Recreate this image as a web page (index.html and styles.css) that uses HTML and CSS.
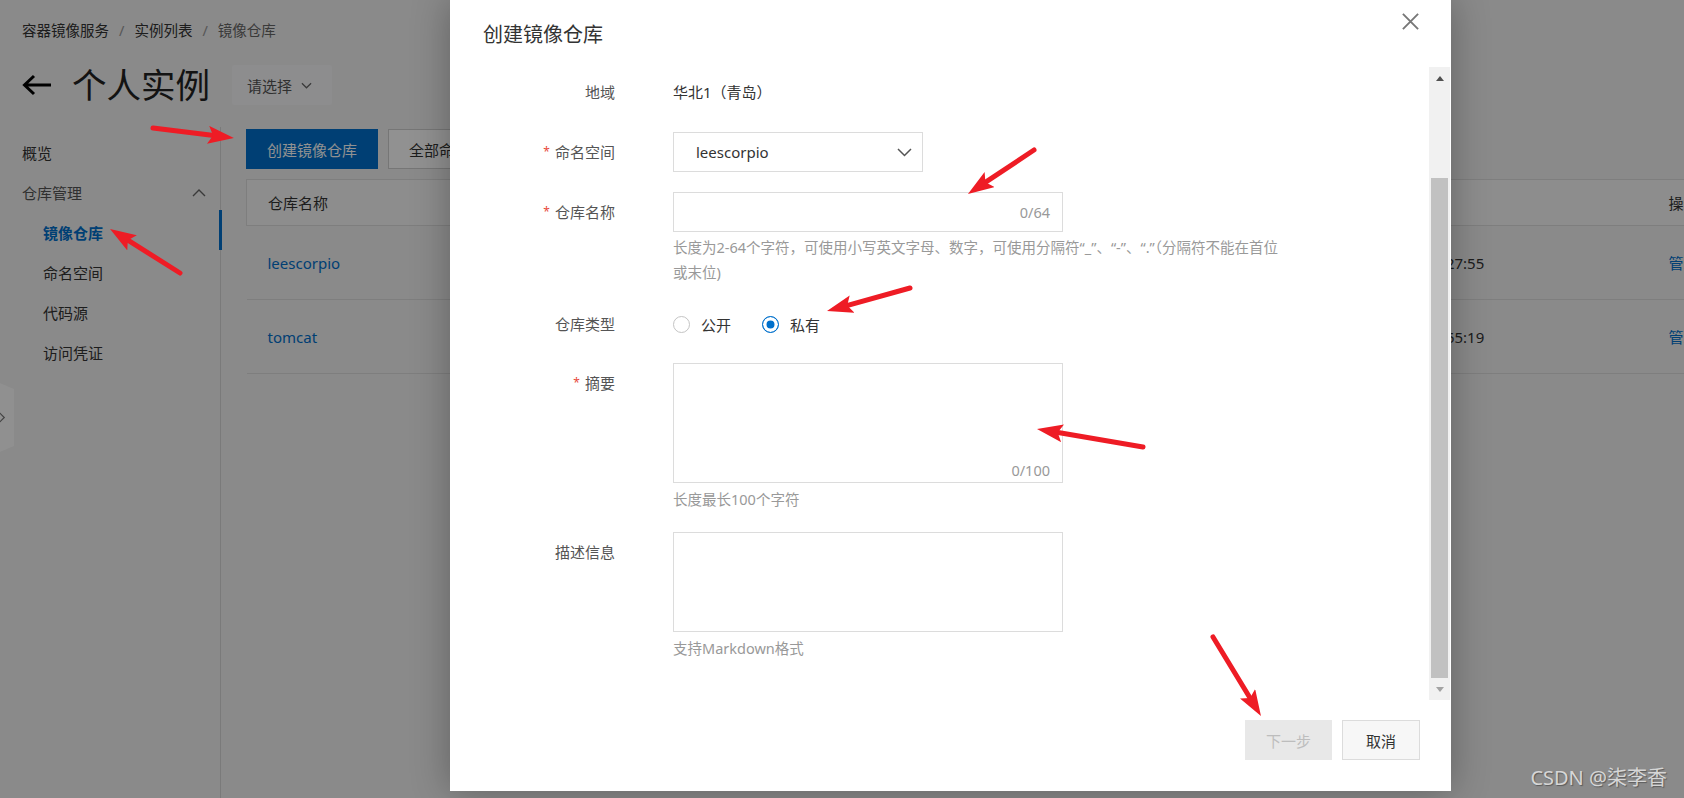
FILE: index.html
```html
<!DOCTYPE html>
<html lang="zh-CN">
<head>
    <meta charset="UTF-8">
    <title>创建镜像仓库</title>
    <link rel="stylesheet" href="styles.css">
</head>
<body>
    <!-- page behind the dialog -->
    <div class="page">
        <div class="crumbs">容器镜像服务<span class="sep">/</span>实例列表<span class="sep">/</span><span class="current">镜像仓库</span></div>
        <div class="page-head">
            <svg class="back" viewBox="0 0 30 22"><path d="M29 11H3M12 2L2.5 11L12 20" fill="none" stroke="#000" stroke-width="3"/></svg>
            <h1>个人实例</h1>
            <div class="picker">请选择<svg viewBox="0 0 12 7"><path d="M1 1l5 5 5-5" fill="none" stroke="#666" stroke-width="1.3"/></svg></div>
        </div>
        <div class="layout">
            <div class="side">
                <div class="nav-item">概览</div>
                <div class="nav-item nav-group">仓库管理<svg viewBox="0 0 14 8"><path d="M1 7l6-6 6 6" fill="none" stroke="#666" stroke-width="1.4"/></svg></div>
                <div class="nav-item sub active">镜像仓库</div>
                <div class="nav-item sub">命名空间</div>
                <div class="nav-item sub">代码源</div>
                <div class="nav-item sub">访问凭证</div>
            </div>
            <div class="main">
                <div class="toolbar">
                    <button class="btn-primary">创建镜像仓库</button>
                    <button class="btn-line">全部命名空间</button>
                </div>
                <table class="repo-table">
                    <colgroup><col class="c-name"><col class="c-time"><col class="c-op"></colgroup>
                    <thead>
                        <tr><th>仓库名称</th><th>创建时间</th><th>操作</th></tr>
                    </thead>
                    <tbody>
                        <tr><td><a>leescorpio</a></td><td>2022-09-13 19:27:55</td><td><a>管理</a></td></tr>
                        <tr><td><a>tomcat</a></td><td>2022-09-13 18:55:19</td><td><a>管理</a></td></tr>
                    </tbody>
                </table>
            </div>
        </div>
        <div class="collapse-tab"><svg viewBox="0 0 8 14"><path d="M0 1l6 6-6 6" fill="none" stroke="#777" stroke-width="1.4"/></svg></div>
    </div>

    <div class="mask"></div>

    <!-- Create repository dialog -->
    <div class="dialog">
        <div class="dialog-head">创建镜像仓库</div>
        <svg class="dialog-close" viewBox="0 0 20 20"><path d="M2 2L18 18M18 2L2 18" stroke="#777" stroke-width="2"/></svg>
        <div class="dialog-body">
            <div class="form">
                <div class="form-item">
                    <div class="form-label">地域</div>
                    <div class="form-text">华北1（青岛）</div>
                </div>
                <div class="form-item">
                    <div class="form-label"><i>*</i>命名空间</div>
                    <div class="select">leescorpio<svg viewBox="0 0 15 9"><path d="M1 1l6.5 6.5L14 1" fill="none" stroke="#555" stroke-width="1.5"/></svg></div>
                </div>
                <div class="form-item">
                    <div class="form-label"><i>*</i>仓库名称</div>
                    <div>
                        <div class="input"><span class="count">0/64</span></div>
                        <div class="help narrow">长度为2-64个字符，可使用小写英文字母、数字，可使用分隔符“_”、“-”、“.”（分隔符不能在首位或末位)</div>
                    </div>
                </div>
                <div class="form-item">
                    <div class="form-label">仓库类型</div>
                    <div class="radios">
                        <label class="radio"><span class="dot"></span>公开</label>
                        <label class="radio checked"><span class="dot"></span>私有</label>
                    </div>
                </div>
                <div class="form-item">
                    <div class="form-label"><i>*</i>摘要</div>
                    <div>
                        <div class="textarea"><span class="count">0/100</span></div>
                        <div class="help">长度最长100个字符</div>
                    </div>
                </div>
                <div class="form-item">
                    <div class="form-label">描述信息</div>
                    <div>
                        <div class="textarea tall"></div>
                        <div class="help">支持Markdown格式</div>
                    </div>
                </div>
            </div>
            <div class="vscroll">
                <div class="vs-btn up"><span></span></div>
                <div class="vs-track"><div class="vs-thumb"></div></div>
                <div class="vs-btn down"><span></span></div>
            </div>
        </div>
        <div class="dialog-foot">
            <button class="btn-next">下一步</button>
            <button class="btn-cancel">取消</button>
        </div>
    </div>

    <div class="watermark">CSDN @柒李香</div>

    <!-- red annotation arrows -->
    <svg class="marks" viewBox="0 0 1684 798">
        <defs>
            <marker id="head" markerUnits="userSpaceOnUse" markerWidth="26" markerHeight="18" refX="12" refY="9" orient="auto">
                <path d="M0,0 L26,9 L0,18 L5,9 z" fill="#ee1c25"/>
            </marker>
        </defs>
        <g stroke="#ee1c25" stroke-width="5" stroke-linecap="round" marker-end="url(#head)">
            <line x1="153" y1="128" x2="220" y2="136.3"/>
            <line x1="180" y1="273" x2="121.9" y2="236.4"/>
            <line x1="1034" y1="150" x2="979.6" y2="186.2"/>
            <line x1="910" y1="288" x2="840.5" y2="307.3"/>
            <line x1="1143" y1="447" x2="1050.8" y2="431.3"/>
            <line x1="1213" y1="637" x2="1253.7" y2="704"/>
        </g>
    </svg>
</body>
</html>
```

FILE: styles.css
```css
* {
    box-sizing: border-box;
}
html, body {
    margin: 0;
}
body {
    position: relative;
    width: 1684px;
    height: 798px;
    overflow: hidden;
    background-color: #f2f2f2;
    font-family: "Noto Sans", "Noto Sans CJK SC", sans-serif;
    font-size: 15px;
    color: #333;
}
button {
    font-family: inherit;
    font-size: 15px;
    cursor: pointer;
}

/* page */
.crumbs {
    height: 60px;
    padding: 20px 0 0 22px;
    line-height: 20px;
    font-size: 14.5px;
}
.crumbs .sep {
    color: #999;
    margin: 0 10px;
}
.crumbs .current {
    color: #666;
}
.page-head {
    display: flex;
    align-items: center;
    height: 50px;
    padding-left: 22px;
}
.back {
    width: 30px;
    height: 22px;
    margin-right: 20px;
}
.page-head h1 {
    margin: 0 22px 0 0;
    font-size: 34.5px;
    font-weight: normal;
    line-height: 40px;
    color: #222;
}
.picker {
    display: flex;
    align-items: center;
    height: 40px;
    padding: 0 20px 0 15px;
    background-color: #f8f8fa;
    border-radius: 2px;
    color: #555;
}
.picker svg {
    width: 11px;
    height: 7px;
    margin-left: 9px;
}
.layout {
    display: flex;
    height: 671px;
    margin-top: 17px;
}
.side {
    width: 221px;
    flex-shrink: 0;
    padding-top: 6px;
    border-right: 1px solid #d6d6d6;
}
.nav-item {
    position: relative;
    height: 40px;
    line-height: 40px;
    padding-left: 22px;
}
.nav-group {
    display: flex;
    align-items: center;
    justify-content: space-between;
    padding-right: 14px;
    color: #555;
}
.nav-group svg {
    width: 14px;
    height: 8px;
}
.nav-item.sub {
    padding-left: 43px;
}
.nav-item.active {
    color: #0070cc;
    font-weight: bold;
}
.nav-item.active::after {
    content: "";
    position: absolute;
    right: -2px;
    top: -3px;
    width: 3px;
    height: 40px;
    background-color: #0070cc;
}
.main {
    flex: 1;
    padding: 2px 0 0 25px;
}
.toolbar {
    display: flex;
    gap: 10px;
}
.btn-primary {
    height: 40px;
    padding: 0 21px;
    border: none;
    background-color: #0070cc;
    color: #fff;
}
.btn-line {
    height: 40px;
    width: 150px;
    padding: 0 20px;
    text-align: left;
    border: 1px solid #cfcfcf;
    background-color: #fff;
    color: #333;
}
.repo-table {
    margin-top: 10px;
    width: 1601px;
    table-layout: fixed;
    border-collapse: collapse;
}
.c-name {
    width: 1075px;
}
.c-time {
    width: 326px;
}
.c-op {
    width: 200px;
}
.repo-table th {
    height: 46px;
    padding-left: 21px;
    text-align: left;
    font-weight: normal;
    background-color: #f8f8f8;
    border-top: 1px solid #dedede;
    border-bottom: 1px solid #dedede;
}
.repo-table th:first-child {
    border-left: 1px solid #dedede;
}
.repo-table td {
    height: 74px;
    padding-left: 21px;
    border-bottom: 1px solid #dedede;
}
.repo-table a {
    color: #0070cc;
}
.collapse-tab {
    position: absolute;
    left: 0;
    top: 383px;
    width: 14px;
    height: 69px;
    display: flex;
    align-items: center;
    background-color: #fdfdfd;
    clip-path: polygon(0 0, 14px 6px, 14px 63px, 0 69px);
}
.collapse-tab svg {
    width: 7px;
    height: 13px;
    margin-left: -1px;
}

.mask {
    position: absolute;
    inset: 0;
    background-color: rgba(0, 0, 0, 0.43);
}

/* dialog */
.dialog {
    position: absolute;
    left: 450px;
    top: 0;
    width: 1001px;
    height: 791px;
    display: flex;
    flex-direction: column;
    background-color: #fff;
    box-shadow: 0 0 36px rgba(0, 0, 0, 0.3);
}
.dialog-head {
    height: 67px;
    display: flex;
    align-items: center;
    padding-left: 33px;
    font-size: 20px;
    color: #333;
}
.dialog-close {
    position: absolute;
    top: 12px;
    right: 31px;
    width: 19px;
    height: 19px;
}
.dialog-body {
    display: flex;
    height: 633px;
}
.form {
    flex: 1;
    padding-top: 5px;
    overflow: hidden;
}
.form-item {
    display: grid;
    grid-template-columns: 165px 1fr;
    column-gap: 58px;
    align-items: start;
    margin-bottom: 20px;
}
.form-label {
    text-align: right;
    line-height: 40px;
    color: #555;
}
.form-label i {
    font-style: normal;
    font-size: 12px;
    color: #e84a3c;
    margin-right: 5px;
    vertical-align: 2px;
}
.form-text {
    line-height: 40px;
}
.select {
    display: flex;
    align-items: center;
    justify-content: space-between;
    width: 250px;
    height: 40px;
    padding: 0 10px 0 22px;
    border: 1px solid #dcdcdc;
}
.select svg {
    width: 15px;
    height: 9px;
}
.input {
    display: flex;
    align-items: center;
    justify-content: flex-end;
    width: 390px;
    height: 40px;
    padding-right: 12px;
    border: 1px solid #dcdcdc;
}
.textarea {
    display: flex;
    align-items: flex-end;
    justify-content: flex-end;
    width: 390px;
    height: 120px;
    padding-right: 12px;
    border: 1px solid #dcdcdc;
}
.textarea.tall {
    height: 100px;
}
.count {
    font-size: 14.5px;
    line-height: 24px;
    color: #999;
}
.help {
    width: 640px;
    margin-top: 4px;
    font-size: 14.5px;
    line-height: 24.5px;
    color: #999;
}
.help.narrow {
    width: 612px;
    margin-top: 3px;
}
.form-item:nth-child(4) {
    margin-bottom: 19px;
}
.radios {
    display: flex;
    align-items: center;
    height: 40px;
}
.radio {
    display: flex;
    align-items: center;
    margin-right: 31px;
}
.dot {
    width: 17px;
    height: 17px;
    margin-right: 11px;
    border: 1px solid #c4c4c4;
    border-radius: 50%;
    background-color: #fff;
}
.radio.checked .dot {
    border-color: #0070cc;
    background-color: #0070cc;
    box-shadow: inset 0 0 0 3.5px #fff;
}
.vscroll {
    display: flex;
    flex-direction: column;
    width: 21px;
    margin-right: 1px;
    background-color: #f1f1f1;
}
.vs-btn {
    height: 22px;
    display: flex;
    align-items: center;
    justify-content: center;
}
.vs-btn span {
    width: 0;
    height: 0;
    border-left: 4.5px solid transparent;
    border-right: 4.5px solid transparent;
}
.vs-btn.up span {
    border-bottom: 5px solid #505050;
}
.vs-btn.down span {
    border-top: 5px solid #a3a3a3;
}
.vs-track {
    flex: 1;
    padding: 89px 2px 0;
}
.vs-thumb {
    height: 100%;
    background-color: #c1c1c1;
}
.dialog-foot {
    display: flex;
    justify-content: flex-end;
    gap: 10px;
    padding: 20px 31px 0 0;
}
.btn-next {
    width: 87px;
    height: 40px;
    border: none;
    background-color: #e8e8e8;
    color: #bdbdbd;
}
.btn-cancel {
    width: 78px;
    height: 40px;
    border: 1px solid #dcdcdc;
    background-color: #f7f7f7;
    color: #333;
}

.watermark {
    position: absolute;
    right: 17px;
    bottom: 7px;
    font-size: 20px;
    color: #d6d6d6;
    text-shadow: 1px 1px 1px rgba(0, 0, 0, 0.35);
}
.marks {
    position: absolute;
    left: 0;
    top: 0;
    width: 1684px;
    height: 798px;
    pointer-events: none;
}
```
